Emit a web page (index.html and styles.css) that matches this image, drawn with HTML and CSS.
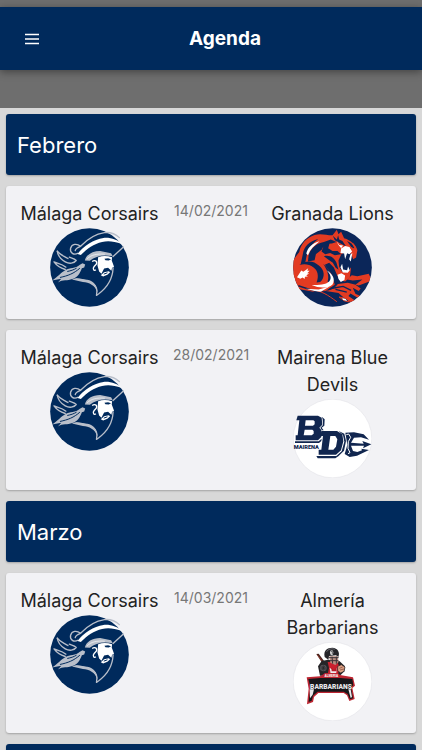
FILE: index.html
```html
<!DOCTYPE html>
<html lang="es">
<head>
    <meta charset="UTF-8">
    <meta name="viewport" content="width=device-width, initial-scale=1.0">
    <title>Agenda</title>
    <link rel="stylesheet" href="styles.css">
</head>
<body>

<!-- Logo Corsairs -->
<svg class="sprite" aria-hidden="true">
    <symbol id="corsairs" viewBox="0 0 238 238">
        <circle cx="119" cy="119" r="118.500" fill="#002a5c"/>
        <g fill="none" stroke="#b9bfca" stroke-width="4" stroke-linecap="round" stroke-linejoin="round">
            <path d="M84 76 C72 83 59 75 62 61 C66 47 81 46 92 55 C112 34 136 18 164 14 C184 12 198 19 209 29"/>
            <path d="M76 68 C77 61 84 58 92 55"/>
            <path d="M221 57 L190 86"/>
            <path d="M22 70 C24 86 34 95 46 102 C58 109 72 107 79 98 C74 92 66 91 58 88"/>
            <path d="M22 70 C31 82 42 84 54 92"/>
            <path d="M12 102 C22 116 33 121 46 125 M12 102 C25 107 36 108 48 118"/>
            <path d="M190 120 C189 150 177 176 146 199 L140 203 C144 187 140 173 124 165 C110 156 96 157 79 154"/>
        </g>
        <path d="M83 78 C101 54 132 34 161 30 C183 28 204 36 216 48 C193 40 175 37 157 42 C132 48 112 62 93 81 Z" fill="#fff"/>
        <path d="M105 98 C109 80 128 69 151 69 L184 76 L189 85 C161 79 137 84 120 99 Z" fill="#b9bfca"/>
        <path d="M112 93 C123 81 142 77 165 79" fill="none" stroke="#fff" stroke-width="2"/>
        <path d="M6 158 C23 147 33 134 46 127 C60 119 77 123 90 111 L98 106 L106 110 L103 119 L96 121 C90 138 82 149 67 154 C53 160 38 155 24 164 L34 153 Z" fill="#b9bfca"/>
        <path d="M30 149 C54 144 72 137 90 121 M52 131 C62 129 72 126 80 121" fill="none" stroke="#002a5c" stroke-width="3"/>
        <path d="M66 155 C83 147 97 154 112 156 C132 159 143 174 143 194 C136 173 118 164 99 163 Z" fill="#b9bfca"/>
        <path d="M145 88 C158 83 174 84 187 88 L186 98 L193 117 L187 120 L185 129 L175 120 L163 122 L155 138 L148 131 L143 113 Z" fill="#fff"/>
        <path d="M164 93 L175 91 L184 94 L177 98 L167 97 Z" fill="#002a5c"/>
        <path d="M153 142 L163 133 L177 130 L181 133 L173 141 L160 146 Z" fill="#fff"/>
        <path d="M162 139 L173 135" fill="none" stroke="#002a5c" stroke-width="3"/>
        <path d="M127 101 C134 96 143 99 140 108 L133 116 C127 123 133 131 138 126" fill="none" stroke="#fff" stroke-width="4"/>
    </symbol>
</svg>

<header class="top">
    <div class="appbar">
        <button class="menu" type="button" aria-label="Menú">
            <svg viewBox="0 0 20 20" width="20" height="20">
                <path d="M3 5.500h14M3 10h14M3 14.500h14" stroke="#fff" stroke-width="1.500"/>
            </svg>
        </button>
        <h1 class="title">Agenda</h1>
    </div>
</header>

<main class="agenda">
    <h2 class="month">Febrero</h2>

    <article class="match">
        <div class="team">
            <span>Málaga Corsairs</span>
            <svg class="logo"><use href="#corsairs"/></svg>
        </div>
        <time class="date" datetime="2021-02-14">14/02/2021</time>
        <div class="team">
            <span>Granada Lions</span>
            <svg class="logo" viewBox="0 0 238 238">
                <clipPath id="round"><circle cx="119" cy="119" r="118.500"/></clipPath>
                <g clip-path="url(#round)">
                    <rect width="238" height="238" fill="#0b2659"/>
                    <!-- melena y cabeza -->
                    <path d="M0 97 L19 72 C23 49 40 29 65 21 C85 15 105 23 119 22 L132 5 L137 19 L145 11 L154 31 C174 37 190 51 194 67 L190 89 L181 94 L176 78 L166 72 L151 74 L145 91 L152 126 L164 131 L166 119 L175 120 L171 149 L157 161 L141 157 L132 140 L123 119 L109 105 L96 111 L116 139 L126 171 L98 190 L26 184 L0 154 Z" fill="#e33b22"/>
                    <path d="M30 77 C33 56 49 40 76 33 C61 45 49 58 42 79 L37 104 L23 110 Z M47 82 C53 61 69 47 93 42 L114 35 L131 42 L117 47 C102 46 92 52 85 65 L69 79 L65 97 L45 101 Z M93 52 L111 43 L106 61 L119 69 L134 69 L145 79 L126 82 L112 75 L97 79 L86 71 Z" fill="#0b2659"/>
                    <path d="M79 58 L92 51 L87 65 L73 75 Z M93 85 C110 80 125 89 131 105 L137 126 L128 119 L120 105 L107 96 Z M120 23 L132 35 L136 22 L139 35 L149 39 L160 56 L142 46 L126 37 Z M163 39 C176 44 182 51 186 62 L176 58 L168 47 Z" fill="#0b2659"/>
                    <path d="M19 111 C42 95 63 99 78 113 C95 126 98 148 82 163 L71 164 C79 145 74 127 62 119 C49 108 34 107 19 111 Z M91 108 C109 123 118 143 117 165 L104 162 C111 143 101 124 91 108 Z" fill="#0b2659"/>
                    <!-- boca y dientes -->
                    <path d="M146 78 L158 74 L174 80 L179 94 L171 128 L159 126 L149 133 L139 117 L137 98 Z" fill="#0b2659"/>
                    <path d="M40 77 C45 57 59 46 80 40 C64 53 52 64 45 82 Z M132 39 L139 51 L151 53 L145 61 L136 50 Z M145 62 L157 54 L170 57 L178 71 L170 79 L163 76 L157 94 L154 77 L143 75 Z M173 80 L179 75 L174 101 L169 94 Z M143 118 L148 108 L151 125 L163 127 L166 116 L171 127 L165 135 L150 134 Z M134 141 L146 136 L157 143 L155 157 L144 163 L137 154 Z" fill="#fff"/>
                    <path d="M180 47 L188 61 L182 68 L174 58" fill="none" stroke="#e33b22" stroke-width="4"/>
                    <!-- hombro y balón -->
                    <path d="M0 137 C18 109 47 106 62 122 C76 138 70 159 55 166 C36 175 12 166 0 151 Z" fill="#e33b22"/>
                    <path d="M12 148 L25 128 L31 132 L46 121 L43 129 L50 129 L43 136 L49 137 L40 142 L45 146 L36 147 L35 154 L29 149 L22 153 Z" fill="#fff"/>
                    <path d="M101 127 C121 139 128 155 119 170 C105 183 79 182 56 172 C79 171 99 171 109 161 C117 151 114 140 101 127 Z" fill="#fff"/>
                    <!-- garras -->
                    <path d="M0 157 C24 181 56 183 92 190 C114 190 126 181 135 169 L165 165 L198 173 L238 158 L228 138 L194 145 L177 142 L163 155 L180 158 L209 155 L188 171 L204 182 L198 190 L180 180 L188 198 L208 207 L196 211 L173 197 L167 205 L188 219 L177 225 L151 208 L137 196 L99 190 L61 192 L0 181 Z" fill="#e33b22"/>
                    <path d="M110 183 L151 176 L175 188 M128 185 L162 193 M16 174 L66 190 C96 196 117 208 135 225" fill="none" stroke="#0b2659" stroke-width="4"/>
                    <path d="M45 186 C85 186 106 203 132 222 M139 208 L162 212 L170 223 L154 219 Z" fill="none" stroke="#e33b22" stroke-width="3"/>
                    <path d="M39 183 L77 185 L110 176 L84 192 L65 190 Z M148 211 L159 214 L163 220 L151 217 Z" fill="#fff"/>
                </g>
            </svg>
        </div>
    </article>

    <article class="match">
        <div class="team">
            <span>Málaga Corsairs</span>
            <svg class="logo"><use href="#corsairs"/></svg>
        </div>
        <time class="date" datetime="2021-02-28">28/02/2021</time>
        <div class="team">
            <span>Mairena Blue Devils</span>
            <svg class="logo" viewBox="24 23 237 237">
                <circle cx="142.500" cy="141.500" r="118" fill="#fff" stroke="#e6e6ea" stroke-width="2"/>
                <g fill="#11264f">
                    <path fill-rule="evenodd" d="M38 73 H99 L110 79 L112 100 L103 109 L109 116 V137 L99 147 H32 V132 H38 L43 87 H34 Z M62 87 L60 103 H84 L89 99 V90 L85 87 Z M59 115 L56 132 H80 L86 127 V119 L82 115 Z"/>
                    <path fill-rule="evenodd" d="M109 119 H156 L172 129 L175 150 L168 177 L153 190 H101 V175 H109 L114 134 H106 Z M136 134 L130 175 H145 L153 166 L157 144 L151 134 Z"/>
                    <path d="M110 76 L119 84 L118 103 L110 109 L116 117 H111 L106 109 L114 101 L113 83 Z M30 150 H101 L110 142 L109 149 L102 155 H30 Z M161 119 L178 127 L183 149 L177 178 L160 195 L151 201 H98 L94 194 H154 L170 180 L178 151 L174 131 Z"/>
                    <path d="M181 124 L207 123 L236 129 L252 145 L228 138 L207 139 L198 154 L236 157 L232 149 L259 159 L234 171 L237 163 L198 163 L204 179 L217 182 L231 177 L229 172 L252 176 L216 193 L194 197 L179 188 L187 160 Z"/>
                </g>
                <path d="M184 130 L191 128 L197 138 L190 151 L189 171 L195 184 L189 187" fill="none" stroke="#fff" stroke-width="3"/>
                <text x="26" y="174" class="mairena">MAIRENA</text>
            </svg>
        </div>
    </article>

    <h2 class="month">Marzo</h2>

    <article class="match">
        <div class="team">
            <span>Málaga Corsairs</span>
            <svg class="logo"><use href="#corsairs"/></svg>
        </div>
        <time class="date" datetime="2021-03-14">14/03/2021</time>
        <div class="team">
            <span>Almería Barbarians</span>
            <svg class="logo" viewBox="24 23 237 237">
                <circle cx="142.500" cy="141.500" r="118" fill="#fff" stroke="#e6e6ea" stroke-width="2"/>
                <path d="M94 59 L101 58 L120 84 L114 90 Z" fill="#49231f"/>
                <path d="M97 62 L116 86" stroke="#a94534" stroke-width="2"/>
                <path d="M99 96 L110 80 L129 76 L163 80 L180 96 L178 111 L164 125 L105 124 Z" fill="#252427"/>
                <path d="M128 83 L156 82 L164 98 L158 124 L127 124 L132 101 Z" fill="#c9202e"/>
                <path d="M134 100 L147 110 L157 99 L153 119 L137 119 Z" fill="#eee"/>
                <path d="M139 100 L147 107 L155 97 V111 H140 Z" fill="#b61c29"/>
                <circle cx="115" cy="101" r="10" fill="#555459"/>
                <path d="M107 101 H123 M115 93 V109 M110 95 L121 107 M120 94 L110 108" stroke="#242326" stroke-width="2"/>
                <path d="M158 96 L169 91 L180 98 L177 111 L167 116 L158 109 Z" fill="#dba183" stroke="#272326" stroke-width="2"/>
                <path d="M163 102 L173 98 M165 107 L177 104" stroke="#7e443a" stroke-width="2"/>
                <path d="M119 68 C115 48 126 40 142 40 C158 41 166 54 160 68 L153 63 L132 65 L130 76 Z" fill="#252529"/>
                <path d="M125 52 C130 43 143 42 149 45" fill="none" stroke="#737278" stroke-width="3"/>
                <ellipse cx="140" cy="55" rx="5" ry="7" fill="#ddd"/>
                <path d="M138 51 H142 V59" fill="none" stroke="#252529" stroke-width="2"/>
                <path d="M133 66 H158 L161 83 L151 92 L136 85 Z" fill="#b78c80"/>
                <path d="M130 70 H161 M133 79 H160 M141 67 L143 88 M154 67 V88" stroke="#3b3438" stroke-width="3"/>
                <path d="M113 121 L120 116 H158 L165 122 L204 129 L210 154 L202 161 L209 194 L193 200 L186 183 L176 176 H100 L87 188 L84 203 L66 210 L71 163 L65 129 L105 126 Z" fill="#bd2632"/>
                <path d="M70 134 L106 131 H166 L202 134 L205 153 L198 159 L204 192 L195 195 L188 179 L176 172 H98 L84 184 L80 199 L71 203 L76 159 Z" fill="#17171a"/>
                <path d="M74 165 H87 L83 181 L75 192 Z M190 165 H197 L201 188 L197 191 Z" fill="#e8e8ea"/>
                <text x="139" y="129" class="almeria">ALMERIA</text>
                <text x="138" y="164" class="barbarians">BARBARIANS</text>
            </svg>
        </div>
    </article>

    <div class="month"></div>
</main>

</body>
</html>
```

FILE: styles.css
```css
* {
    box-sizing: border-box;
}

body {
    display: flex;
    flex-direction: column;
    height: 100vh;
    margin: 0;
    overflow: hidden;
    font-family: Inter, "Liberation Sans", sans-serif;
    background-color: #d8d8d8;
    color: #222;
}

.sprite {
    position: absolute;
    width: 0;
    height: 0;
}

.top {
    flex-shrink: 0;
    padding: 7px 0 38px;
    background-color: #6e6e6e;
}

.appbar {
    display: flex;
    align-items: center;
    padding: 8px 28px 7px 8px;
    background-color: #002a5c;
    box-shadow: 0 2px 8px rgba(0, 0, 0, 0.4);
}

.menu {
    display: flex;
    align-items: center;
    justify-content: center;
    width: 48px;
    height: 48px;
    padding: 0;
    background: none;
    border: none;
    cursor: pointer;
}

.title {
    flex: 1;
    margin: 0;
    font-size: 19px;
    font-weight: 700;
    line-height: 32px;
    text-align: center;
    color: #fff;
}

.agenda {
    display: flex;
    flex: 1;
    flex-direction: column;
    gap: 11px;
    min-height: 0;
    padding: 6px 6px 0;
    overflow: hidden;
}

.month,
.match {
    flex-shrink: 0;
    border-radius: 3px;
    box-shadow: 0 1px 2px rgba(0, 0, 0, 0.25);
}

.month {
    min-height: 61px;
    margin: 0;
    padding: 16px 11px 15px;
    font-size: 22px;
    font-weight: 400;
    line-height: 30px;
    background-color: #002a5c;
    color: #fff;
}

.match {
    display: grid;
    grid-template-columns: 1fr 76px 1fr;
    gap: 14px;
    padding: 14px 14px 12px;
    background-color: #f2f2f5;
}

.team {
    display: flex;
    flex-direction: column;
    align-items: center;
    gap: 1px;
    font-size: 18px;
    line-height: 27px;
    text-align: center;
}

.logo {
    width: 79px;
    height: 79px;
}

.date {
    font-size: 14px;
    line-height: 22px;
    text-align: center;
    color: #777;
}

.mairena {
    font: 900 17px Roboto, sans-serif;
    fill: #11264f;
}

.almeria {
    font: bold 9px "Liberation Sans", sans-serif;
    text-anchor: middle;
    fill: #fff;
}

.barbarians {
    font: 900 20px Roboto, sans-serif;
    text-anchor: middle;
    fill: #e8e8ea;
}
```
